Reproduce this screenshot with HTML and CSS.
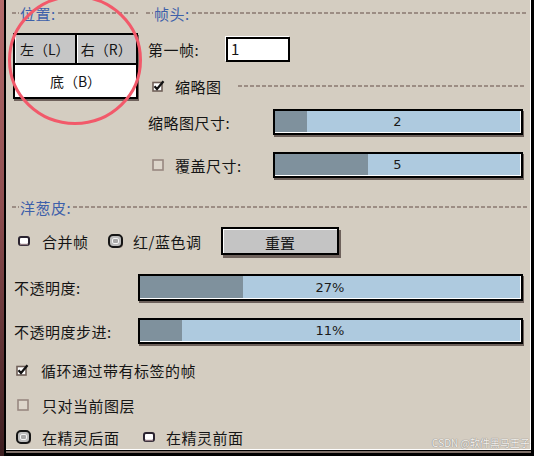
FILE: index.html
```html
<!DOCTYPE html>
<html lang="zh-CN">
<head>
<meta charset="utf-8">
<title>洋葱皮</title>
<link rel="stylesheet" href="styles.css">
</head>
<body>
<div class="window">
  <div class="strip"></div>
  <div class="frame">
    <div class="panel">
      <div class="top">
        <section class="pos">
          <div class="hdr"><span class="dash lead"></span><span class="htxt">位置:</span><span class="dash"></span></div>
          <div class="posbox">
            <div class="pbtn">左（L）</div>
            <div class="pbtn">右（R）</div>
            <div class="pbtn sel">底（B）</div>
          </div>
        </section>
        <section class="frames">
          <div class="hdr"><span class="dash lead"></span><span class="htxt">帧头:</span><span class="dash"></span></div>
          <div class="row r-first">
            <span class="lbl w-first">第一帧:</span>
            <div class="input">1</div>
          </div>
          <div class="row r-thumb">
            <svg class="ico chk" width="13" height="12" viewBox="0 0 13 12"><rect x="1" y="2.5" width="9" height="8.5" fill="#fff" stroke="#6f5f58" stroke-width="1.6"/><path d="M2.5 6.2 L5 9 L11.5 1.2" fill="none" stroke="#111" stroke-width="2.2"/></svg>
            <span class="ctext">缩略图</span>
            <span class="dash thumbdash"></span>
          </div>
          <div class="row r-s1">
            <span class="lbl w-s">缩略图尺寸:</span>
            <div class="slider s-small"><div class="track"><div class="fill" style="width:13%"></div><span class="val">2</span></div></div>
          </div>
          <div class="row r-s2">
            <span class="lbl w-s lbl-chk">
              <svg class="ico box" width="12" height="12" viewBox="0 0 12 12"><rect x="1" y="1" width="10" height="10" fill="#ddd6cb" stroke="#988880" stroke-width="1.6"/></svg>
              <span class="ctext">覆盖尺寸:</span>
            </span>
            <div class="slider s-small"><div class="track"><div class="fill" style="width:38%"></div><span class="val">5</span></div></div>
          </div>
        </section>
      </div>
      <section class="onion">
        <div class="hdr hdr-onion"><span class="dash lead"></span><span class="htxt">洋葱皮:</span><span class="dash"></span></div>
        <div class="row r-mode">
          <svg class="ico rad-off" width="12" height="10" viewBox="0 0 12 10"><rect x="1" y="1" width="10" height="8" rx="2" fill="#fff" stroke="#2a2330" stroke-width="2"/><path d="M2 8.5 H10" stroke="#8f7880" stroke-width="1.4"/></svg>
          <span class="ctext t-merge">合并帧</span>
          <svg class="ico rad-on" width="16" height="15" viewBox="0 0 16 15"><rect x="2" y="2" width="13" height="12" rx="4" fill="#8a7a72"/><rect x="1" y="1" width="13" height="12" rx="4" fill="#bdbdbd" stroke="#151515" stroke-width="2"/><rect x="4.5" y="4.5" width="6" height="5" rx="1.5" fill="#a8a8a8" stroke="#f4f4f4" stroke-width="1"/></svg>
          <span class="ctext t-rb">红/蓝色调</span>
          <button class="btn" type="button">重置</button>
        </div>
        <div class="row r-op">
          <span class="lbl w-op">不透明度:</span>
          <div class="slider s-wide"><div class="track"><div class="fill" style="width:27%"></div><span class="val">27%</span></div></div>
        </div>
        <div class="row r-step">
          <span class="lbl w-op">不透明度步进:</span>
          <div class="slider s-wide"><div class="track"><div class="fill" style="width:11%"></div><span class="val">11%</span></div></div>
        </div>
        <div class="row r-loop">
          <svg class="ico chk" width="13" height="12" viewBox="0 0 13 12"><rect x="1" y="2.5" width="9" height="8.5" fill="#fff" stroke="#6f5f58" stroke-width="1.6"/><path d="M2.5 6.2 L5 9 L11.5 1.2" fill="none" stroke="#111" stroke-width="2.2"/></svg>
          <span class="ctext">循环通过带有标签的帧</span>
        </div>
        <div class="row r-layer">
          <svg class="ico box" width="12" height="12" viewBox="0 0 12 12"><rect x="1" y="1" width="10" height="10" fill="#ddd6cb" stroke="#988880" stroke-width="1.6"/></svg>
          <span class="ctext">只对当前图层</span>
        </div>
        <div class="row r-sprite">
          <svg class="ico rad-on" width="16" height="15" viewBox="0 0 16 15"><rect x="2" y="2" width="13" height="12" rx="4" fill="#8a7a72"/><rect x="1" y="1" width="13" height="12" rx="4" fill="#bdbdbd" stroke="#151515" stroke-width="2"/><rect x="4.5" y="4.5" width="6" height="5" rx="1.5" fill="#a8a8a8" stroke="#f4f4f4" stroke-width="1"/></svg>
          <span class="ctext t-behind">在精灵后面</span>
          <svg class="ico rad-off" width="12" height="10" viewBox="0 0 12 10"><rect x="1" y="1" width="10" height="8" rx="2" fill="#fff" stroke="#2a2330" stroke-width="2"/><path d="M2 8.5 H10" stroke="#8f7880" stroke-width="1.4"/></svg>
          <span class="ctext t-front">在精灵前面</span>
        </div>
      </section>
    </div>
    <div class="under"></div>
  </div>
  <svg class="annot" width="534" height="456" viewBox="0 0 534 456"><ellipse cx="75" cy="60" rx="65.5" ry="63.5" fill="none" stroke="#f2596a" stroke-width="3"/></svg>
  <div class="wm">CSDN @软件黑马王子</div>
</div>
</body>
</html>
```

FILE: styles.css
```css
* { box-sizing: border-box; }
html, body { margin: 0; padding: 0; }
body {
  background: #000;
  width: 534px;
  height: 456px;
  overflow: hidden;
  font-family: "Noto Sans CJK SC", "Noto Sans", sans-serif;
  font-size: 15px;
  letter-spacing: 0.5px;
  color: #151515;
}
.window {
  position: relative;
  display: flex;
  width: 534px;
  height: 456px;
  background: #000;
}
.strip {
  width: 4px;
  background: linear-gradient(#b46c6c, #8e4e50 45%, #3c1e20);
}
.frame {
  margin-left: 2px;
  width: 525px;
}
.panel {
  height: 450px;
  background: #d4cdc1;
  border-right: 1px solid #fff;
  border-bottom: 1px solid #fff;
  padding: 0 3px 0 6px;
}
.under {
  margin-top: 1px;
  height: 2px;
  background: #7f716a;
}

/* headers */
.hdr {
  display: flex;
  align-items: center;
  height: 26px;
}
.dash {
  flex: 1;
  height: 2px;
  background: repeating-linear-gradient(to right, #9c8d84 0 4px, transparent 4px 6px);
}
.dash.lead { flex: 0 0 7px; }
.htxt {
  color: #3d60aa;
  margin: 0 2px 0 1px;
}

.top { display: flex; }
.pos { width: 126px; }
.frames { flex: 1; margin-left: 8px; }

/* position buttons */
.posbox {
  margin: 7px 0 0 1px;
  width: 125px;
  display: grid;
  grid-template-columns: 1fr 1fr;
  gap: 2px;
  border: 2px solid #000;
  background: #000;
  box-shadow: 1px 2px 0 #6f625c;
}
.pbtn {
  height: 28px;
  display: flex;
  align-items: center;
  justify-content: center;
  background: #c6c6c6;
  box-shadow: inset 1px 0 0 #fff;
  letter-spacing: 0;
  font-size: 14px;
}
.pbtn.sel {
  grid-column: span 2;
  height: 32px;
  background: #fff;
}

/* rows */
.row { display: flex; align-items: center; }
.lbl { display: flex; align-items: center; flex: none; }
.ico { flex: none; display: block; }

.r-first { margin-top: 11px; height: 25px; }
.w-first { width: 80px; padding-left: 2px; }
.input {
  width: 64px;
  height: 25px;
  border: 2px solid #000;
  background: #fff;
  box-shadow: -1px -1px 0 #fff;
  padding-left: 3px;
  line-height: 20px;
}

.r-thumb { margin-top: 14px; height: 20px; padding-left: 6px; }
.r-thumb .ctext { margin-left: 10px; }
.thumbdash { margin: 0 3px 0 16px; }

.r-s1 { margin-top: 13px; height: 26px; }
.r-s2 { margin-top: 17px; height: 26px; }
.w-s { width: 127px; padding-left: 2px; }
.lbl-chk { padding-left: 6px; }
.lbl-chk .ctext { margin-left: 11px; }

/* sliders */
.slider {
  height: 26px;
  border: 2px solid #000;
  background: #fff;
  box-shadow: 1px 2px 0 #6c605a;
  flex: none;
}
.s-small { width: 250px; }
.s-wide { width: 385px; }
.track {
  display: grid;
  height: 21px;
  margin-right: 1px;
  background: #aecadf;
}
.fill {
  grid-area: 1 / 1;
  justify-self: start;
  height: 100%;
  background: #7f919d;
}
.val {
  grid-area: 1 / 1;
  justify-self: center;
  align-self: center;
  font-family: "DejaVu Sans", "Noto Sans", sans-serif;
  font-size: 13px;
  letter-spacing: 0;
  color: #1a1a1a;
  line-height: 1;
}

/* onion skin */
.hdr-onion { margin-top: 19px; height: 20px; }
.r-mode { margin-top: 10px; height: 28px; }
.r-mode .rad-off { margin-left: 6px; }
.t-merge { margin-left: 12px; width: 66px; }
.t-rb { margin-left: 9px; width: 88px; }
.btn {
  width: 118px;
  height: 28px;
  border: 2px solid #000;
  background: #c4c4c4;
  box-shadow: inset 1px 1px 0 #fff, 2px 3px 0 #6e625c;
  font: inherit;
  color: inherit;
  padding: 2px 0 0;
  margin: 0;
}

.r-op { margin-top: 19px; height: 27px; }
.r-op .slider { height: 27px; }
.r-op .track { height: 22px; }
.r-step { margin-top: 17px; height: 26px; }
.w-op { width: 126px; padding-left: 2px; }

.r-loop { margin-top: 16px; height: 20px; padding-left: 4px; }
.r-loop .ctext { margin-left: 12px; }
.r-layer { margin-top: 15px; height: 20px; padding-left: 5px; }
.r-layer .ctext { margin-left: 13px; }
.r-sprite { margin-top: 12px; height: 20px; padding-left: 4px; }
.t-behind { margin-left: 10px; width: 101px; }
.t-front { margin-left: 11px; }

/* overlays */
.annot {
  position: absolute;
  left: 0;
  top: 0;
  pointer-events: none;
}
.wm {
  position: absolute;
  right: 4px;
  bottom: 8px;
  font-size: 10px;
  letter-spacing: 0;
  color: #f4f2ee;
  text-shadow: 0 0 1px #8a8580, 0 0 1px #8a8580;
  line-height: 1;
}
```
